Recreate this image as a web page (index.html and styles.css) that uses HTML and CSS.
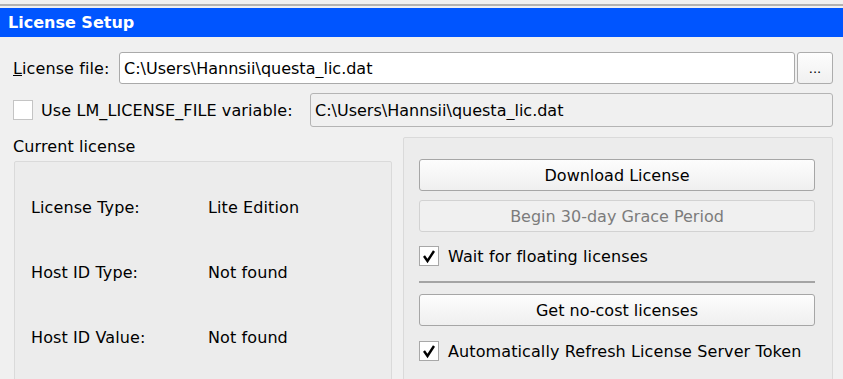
FILE: index.html
```html
<!DOCTYPE html>
<html lang="en">
<head>
  <meta charset="UTF-8">
  <title>License Setup</title>
  <link rel="stylesheet" href="styles.css">
</head>
<body>
  <div class="topline"></div>
  <div class="titlebar">License Setup</div>

  <div class="form">
    <div class="row-file">
      <label class="file-label"><u>L</u>icense file:</label>
      <input class="field" type="text" value="C:\Users\Hannsii\questa_lic.dat">
      <button class="browse">...</button>
    </div>

    <div class="row-env">
      <span class="check"></span>
      <span class="env-label">Use LM_LICENSE_FILE variable:</span>
      <input class="field field-disabled" type="text" value="C:\Users\Hannsii\questa_lic.dat" disabled>
    </div>

    <div class="panels">
      <div class="current">
        <div class="group-title">Current license</div>
        <div class="group-box info">
          <div class="info-row"><span class="info-key">License Type:</span><span>Lite Edition</span></div>
          <div class="info-row"><span class="info-key">Host ID Type:</span><span>Not found</span></div>
          <div class="info-row"><span class="info-key">Host ID Value:</span><span>Not found</span></div>
        </div>
      </div>

      <div class="group-box actions">
        <button class="btn">Download License</button>
        <button class="btn" disabled>Begin 30-day Grace Period</button>
        <div class="check-row">
          <span class="check checked">
            <svg width="20" height="20" viewBox="0 0 20 20"><polyline points="5,10 8.5,15 15,5" fill="none" stroke="#000" stroke-width="2.4"/></svg>
          </span>
          <span>Wait for floating licenses</span>
        </div>
        <div class="separator"></div>
        <button class="btn">Get no-cost licenses</button>
        <div class="check-row">
          <span class="check checked">
            <svg width="20" height="20" viewBox="0 0 20 20"><polyline points="5,10 8.5,15 15,5" fill="none" stroke="#000" stroke-width="2.4"/></svg>
          </span>
          <span>Automatically Refresh License Server Token</span>
        </div>
      </div>
    </div>
  </div>
</body>
</html>
```

FILE: styles.css
```css
body {
  margin: 0;
  background: #f0f0f0;
  font-family: "DejaVu Sans", sans-serif;
  font-size: 16px;
  letter-spacing: 0.1px;
  color: #000;
  overflow: hidden;
}
.topline {
  height: 2px;
  margin-top: 4px;
  background: #b2b2b2;
}
.titlebar {
  margin-top: 2px;
  height: 29px;
  line-height: 29px;
  padding-left: 8px;
  background: #0055ff;
  color: #fff;
  font-weight: bold;
  letter-spacing: 0;
}
.form {
  padding: 15px 10px 0 13px;
}
.row-file {
  display: flex;
  align-items: center;
  height: 32px;
}
.file-label {
  width: 106px;
}
.field {
  box-sizing: border-box;
  height: 32px;
  padding: 0 4px;
  font: inherit;
  color: #000;
  background: #fff;
  border: 1px solid #aaa;
  border-radius: 3px;
  outline: none;
}
.row-file .field {
  flex: 1;
  margin-right: 2px;
}
.browse {
  width: 36px;
  height: 32px;
  font-family: inherit;
  font-size: 13px;
  background: linear-gradient(#fdfdfd, #f0f0f0);
  border: 1px solid #acacac;
  border-radius: 3px;
  padding: 0;
}
.row-env {
  display: flex;
  align-items: center;
  margin-top: 9px;
  height: 34px;
}
.row-env .check {
  margin-right: 8px;
}
.env-label {
  flex: 1;
}
.field-disabled {
  width: 523px;
  height: 34px;
  background: #f0f0f0;
  border-color: #b4b4b4;
  color: #000;
}
.check {
  box-sizing: border-box;
  width: 20px;
  height: 20px;
  flex: none;
  background: #fff;
  border: 1px solid #c4c4c4;
}
.check.checked {
  border-color: #a8a8a8;
}
.check svg {
  display: block;
  margin: -1px;
}
.panels {
  display: grid;
  grid-template-columns: 379px 430px;
  gap: 11px;
  margin-top: 10px;
}
.group-title {
  height: 24px;
  line-height: 20px;
}
.group-box {
  background: #ececec;
  border: 1px solid #dadada;
  border-radius: 2px;
  height: 300px;
}
.info {
  margin-left: 1px;
  padding: 13px 0 0 16px;
}
.info-row {
  display: flex;
  align-items: center;
  height: 65px;
}
.info-key {
  width: 177px;
}
.actions {
  display: flex;
  flex-direction: column;
  padding: 21px 17px 0 15px;
}
.btn {
  height: 32px;
  margin-bottom: 9px;
  font: inherit;
  color: #000;
  background: linear-gradient(#fdfdfd, #efefef);
  border: 1px solid #a6a6a6;
  border-radius: 3px;
}
.btn:disabled {
  color: #7c7c7c;
  background: #f0f0f0;
  border-color: #d2d2d2;
}
.check-row {
  display: flex;
  align-items: center;
  gap: 9px;
  margin-top: 5px;
}
.separator {
  height: 2px;
  margin: 15px 0 11px;
  background: #a4a4a4;
}
.actions .check-row:last-child {
  margin-top: 6px;
}
```
